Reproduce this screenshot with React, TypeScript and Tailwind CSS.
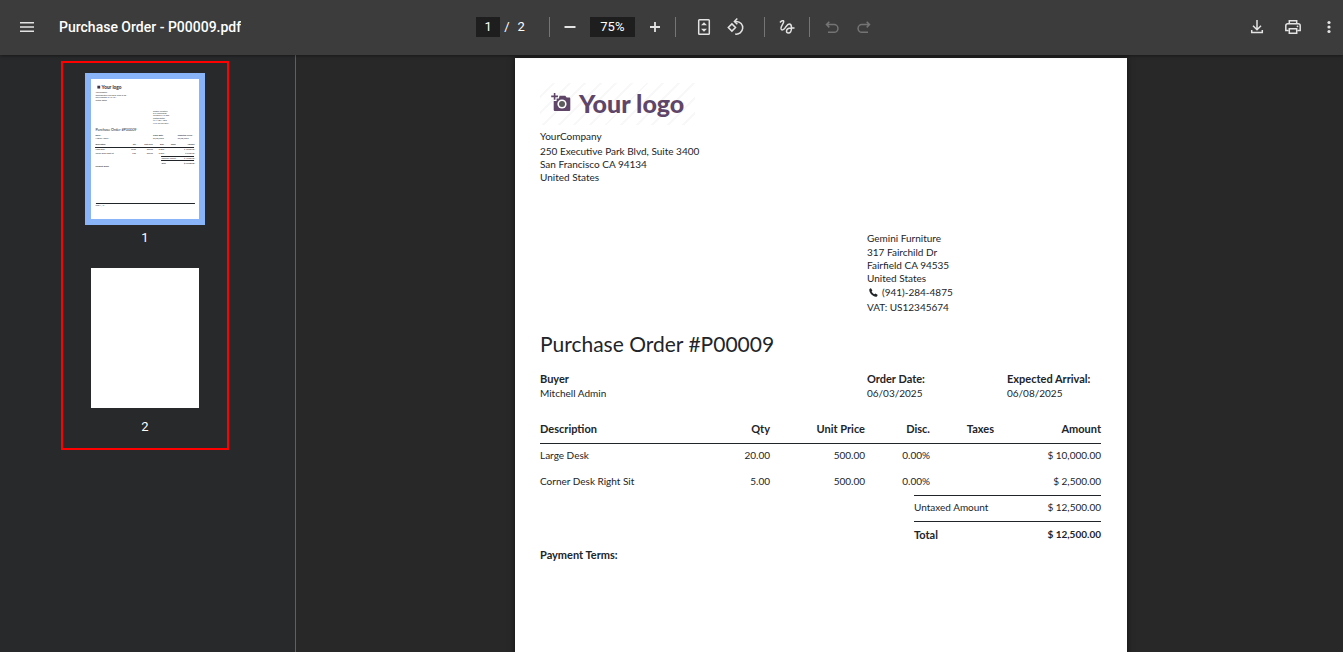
import type { ReactNode } from "react";

type IconProps = { children: ReactNode };

function Icon({ children }: IconProps) {
  return (
    <svg
      viewBox="0 0 20 20"
      className="h-5 w-5 shrink-0"
      fill="none"
      stroke="currentColor"
      strokeWidth="1.5"
      aria-hidden="true"
    >
      {children}
    </svg>
  );
}

type ToolButtonProps = { label: string; disabled?: boolean; children: ReactNode };

function ToolButton({ label, disabled, children }: ToolButtonProps) {
  return (
    <button
      type="button"
      aria-label={label}
      disabled={disabled}
      className="flex h-8 w-8 shrink-0 items-center justify-center rounded-full text-[#e3e3e3] hover:bg-white/10 disabled:text-[#747474]"
    >
      <Icon>{children}</Icon>
    </button>
  );
}

function Divider() {
  return <span className="h-5 w-px shrink-0 bg-[#757575]" />;
}

function Toolbar() {
  return (
    <header className="relative z-10 flex h-[55px] shrink-0 items-center bg-[#3c3c3c] pb-0.5 font-['Roboto',sans-serif] text-white shadow-[0_1px_3px_rgba(0,0,0,0.4)]">
      <div className="flex min-w-0 flex-1 items-center gap-4 pl-[11px]">
        <ToolButton label="Menu">
          <path d="M3 5.750h14M3 10h14M3 14.250h14" />
        </ToolButton>
        <h1 className="truncate text-sm font-medium">Purchase Order - P00009.pdf</h1>
      </div>

      <div className="flex shrink-0 items-center pr-2.5 pl-3 text-[13px]">
        <input
          aria-label="Page number"
          defaultValue="1"
          className="h-5 w-6 bg-[#1e1e1e] text-center outline-none"
        />
        <span className="ml-1">/</span>
        <span className="mr-6 ml-2">2</span>
        <Divider />
        <div className="mx-1 flex items-center gap-1">
          <ToolButton label="Zoom out">
            <path d="M4.500 10h11" strokeWidth="2" />
          </ToolButton>
          <input
            aria-label="Zoom level"
            defaultValue="75%"
            className="h-5 w-[45px] bg-[#1e1e1e] text-center outline-none"
          />
          <ToolButton label="Zoom in">
            <path d="M5 10h10M10 5v10" strokeWidth="1.8" />
          </ToolButton>
        </div>
        <Divider />
        <div className="mx-3 flex items-center">
          <ToolButton label="Fit to page">
            <rect x="4.700" y="2.700" width="10.600" height="14.600" rx="0.800" />
            <path d="M10 5.200l3 3H7zM10 14.800l3-3H7z" fill="currentColor" stroke="none" />
          </ToolButton>
          <ToolButton label="Rotate counterclockwise">
            <path d="M5.900 6.900l3.600 3.600-3.600 3.600-3.600-3.600z" />
            <path d="M8.800 4.400h1.700a6.400 6.400 0 1 1-1.300 12.700" />
            <path d="M11.300 1.500L8.400 4.400l2.900 2.900" />
          </ToolButton>
        </div>
        <Divider />
        <div className="mx-1.5 flex items-center">
          <ToolButton label="Draw">
            <path
              d="M3 5.500C4.200 4 6.700 2.700 6.700 4.700 6.700 6.600 3.400 9.600 4 11.800c.6 1.700 2.400 1.300 3.700-.4C9.300 9.300 10.300 6.900 12.200 6.900c1.700 0 2.300 1.600 2.300 3.500 0 2.700-1.100 5.600-3.200 5.600-1.100 0-1.800-.7-1.800-1.700 0-1.900 2-3.300 4.700-3.300H17.500"
              strokeLinejoin="round"
            />
          </ToolButton>
        </div>
        <Divider />
        <div className="ml-1.5 flex items-center">
          <ToolButton label="Undo" disabled>
            <path d="M7.300 4.800L4.500 7.600l2.800 2.800M4.700 7.600h7.400a3.600 3.600 0 0 1 0 7.700H6" />
          </ToolButton>
          <ToolButton label="Redo" disabled>
            <path d="M12.700 4.800l2.800 2.800-2.800 2.800M15.300 7.600H7.900a3.600 3.600 0 0 0 0 7.700H14" />
          </ToolButton>
        </div>
      </div>

      <div className="flex flex-1 items-center justify-end gap-2 [&>button]:w-7">
        <ToolButton label="Download">
          <path d="M10 3v9.500M6 8.700l4 4 4-4M4.700 13v2.600h10.600V13" />
        </ToolButton>
        <ToolButton label="Print">
          <path d="M6.300 6.700V3.700h7.400v3M5.700 13.500H2.800V8.800c0-1.200.8-2 2-2h10.400c1.200 0 2 .8 2 2v4.700h-2.900" />
          <path d="M6.300 11.800h7.400v4.500H6.300z" />
          <circle cx="14.500" cy="9.300" r="0.900" fill="currentColor" stroke="none" />
        </ToolButton>
        <ToolButton label="More actions">
          <g fill="currentColor" stroke="none">
            <circle cx="10" cy="5.500" r="1.600" />
            <circle cx="10" cy="10" r="1.600" />
            <circle cx="10" cy="14.500" r="1.600" />
          </g>
        </ToolButton>
      </div>
    </header>
  );
}

function PagePreview() {
  return (
    <svg
      viewBox="0 0 612 792"
      className="h-[140px] w-[108px] bg-white"
      fontFamily="Lato, sans-serif"
      fontSize="11"
      fill="#212529"
      preserveAspectRatio="none"
      aria-hidden="true"
    >
      <path d="M36 38h16v16H36z" fill="#3f3346" />
      <text x="60" y="54" fontSize="27" fontWeight="900" fill="#3f3346">Your logo</text>
      <text x="25" y="82">YourCompany</text>
      <text x="25" y="97">250 Executive Park Blvd, Suite 3400</text>
      <text x="25" y="109">San Francisco CA 94134</text>
      <text x="25" y="122">United States</text>
      <text x="352" y="184">Gemini Furniture</text>
      <text x="352" y="198">317 Fairchild Dr</text>
      <text x="352" y="211">Fairfield CA 94535</text>
      <text x="352" y="224">United States</text>
      <text x="352" y="238">(941)-284-4875</text>
      <text x="352" y="253">VAT: US12345674</text>
      <text x="25" y="293" fontSize="21">Purchase Order #P00009</text>
      <g fontWeight="700">
        <text x="25" y="324">Buyer</text>
        <text x="352" y="324">Order Date:</text>
        <text x="492" y="324">Expected Arrival:</text>
        <text x="25" y="375">Description</text>
        <text x="255" y="375" textAnchor="end">Qty</text>
        <text x="350" y="375" textAnchor="end">Unit Price</text>
        <text x="415" y="375" textAnchor="end">Disc.</text>
        <text x="479" y="375" textAnchor="end">Taxes</text>
        <text x="586" y="375" textAnchor="end">Amount</text>
        <text x="399" y="480">Total</text>
        <text x="586" y="480" textAnchor="end">$ 12,500.00</text>
        <text x="25" y="500">Payment Terms:</text>
      </g>
      <text x="25" y="339">Mitchell Admin</text>
      <text x="352" y="339">06/03/2025</text>
      <text x="492" y="339">06/08/2025</text>
      <text x="25" y="401">Large Desk</text>
      <text x="255" y="401" textAnchor="end">20.00</text>
      <text x="350" y="401" textAnchor="end">500.00</text>
      <text x="415" y="401" textAnchor="end">0.00%</text>
      <text x="586" y="401" textAnchor="end">$ 10,000.00</text>
      <text x="25" y="427">Corner Desk Right Sit</text>
      <text x="255" y="427" textAnchor="end">5.00</text>
      <text x="350" y="427" textAnchor="end">500.00</text>
      <text x="415" y="427" textAnchor="end">0.00%</text>
      <text x="586" y="427" textAnchor="end">$ 2,500.00</text>
      <text x="399" y="453">Untaxed Amount</text>
      <text x="586" y="453" textAnchor="end">$ 12,500.00</text>
      <path d="M23 384.600h561v5.700H23zM397 435.500h187v5.700H397zM397 458.200h187v5.700H397zM28 701.500h561v5.700H28z" />
      <text x="25" y="718">Page 1 / 2</text>
    </svg>
  );
}

function Sidebar() {
  return (
    <nav
      aria-label="Page thumbnails"
      className="w-[296px] shrink-0 border-r border-[#5f6063] bg-[#28292a] pt-1.5 font-['Roboto',sans-serif] text-[13px] leading-5 text-white"
    >
      <div className="ml-[61px] flex w-[168px] flex-col items-center border-2 border-[#ff0000] pt-2.5 pb-[11px]">
        <button type="button" className="flex flex-col items-center">
          <span className="border-[6px] border-[#8ab4f8]">
            <PagePreview />
          </span>
          <span className="mt-[3px]">1</span>
        </button>
        <button type="button" className="mt-5 flex flex-col items-center gap-[9px]">
          <span className="h-[140px] w-[108px] bg-white" />
          <span>2</span>
        </button>
      </div>
    </nav>
  );
}

function Logo() {
  return (
    <div className="flex h-[42px] w-[155px] items-center gap-2 bg-[repeating-linear-gradient(135deg,#fff_0px,#fff_9px,#f8f8f9_9px,#f8f8f9_11px)] pb-0.5 pl-[11px] text-[#5f4668]">
      <svg viewBox="0 0 20 20" className="h-5 w-5 shrink-0" aria-hidden="true">
        <path
          fill="currentColor"
          d="M2.800 0h1.600v2.600H7v1.600H4.400v2.600H2.800V4.200H.2V2.600h2.600zM8.500 2.800h5.800L15.700 4.500H18c.8 0 1.300.5 1.300 1.300v11c0 .8-.5 1.300-1.300 1.300H4c-.8 0-1.300-.5-1.300-1.300V8h2.900V5.400h2.300z"
        />
        <circle cx="11" cy="11" r="4.600" fill="#fff" />
        <circle cx="11" cy="11" r="3" fill="#5c5c5c" />
      </svg>
      <span className="text-[25px] leading-none font-black whitespace-nowrap">Your logo</span>
    </div>
  );
}

const lines = [
  { name: "Large Desk", qty: "20.00", price: "500.00", disc: "0.00%", amount: "$ 10,000.00" },
  { name: "Corner Desk Right Sit", qty: "5.00", price: "500.00", disc: "0.00%", amount: "$ 2,500.00" },
];

function PurchaseOrder() {
  return (
    <article className="min-h-[792px] w-[612px] shrink-0 bg-white pt-[25px] pr-[26px] pl-[25px] font-['Lato',sans-serif] text-[10px] leading-[13px] text-[#212529] shadow-[0_0_6px_rgba(0,0,0,0.6)]">
      <Logo />
      <address className="mt-[5px] not-italic">
        <p className="mb-0.5">YourCompany</p>
        <p>250 Executive Park Blvd, Suite 3400</p>
        <p>San Francisco CA 94134</p>
        <p>United States</p>
      </address>

      <address className="mt-12 ml-[327px] not-italic">
        <p className="mb-px">Gemini Furniture</p>
        <p>317 Fairchild Dr</p>
        <p>Fairfield CA 94535</p>
        <p>United States</p>
        <p className="mt-px flex items-center gap-1 pl-0.5">
          <svg viewBox="0 0 12 12" className="h-[9px] w-[9px]" fill="currentColor" aria-hidden="true">
            <path d="M.5 1.800C1 .9 2 .4 2.800.5l1.700 2.900-1 1.300c.5 1.500 2 3 3.600 3.700l1.400-1 2.900 1.700c.1.900-.4 1.900-1.300 2.400C5.600 12.500-.5 6.200.5 1.800z" />
          </svg>
          <span>(941)-284-4875</span>
        </p>
        <p className="mt-0.5">VAT: US12345674</p>
      </address>

      <h2 className="mt-[17px] text-[21px] leading-[26px]">Purchase Order #P00009</h2>

      <dl className="mt-3.5 grid grid-cols-[327px_140px_1fr] leading-[15px] [&_dt]:text-[11px] [&_dt]:font-bold">
        <div>
          <dt>Buyer</dt>
          <dd>Mitchell Admin</dd>
        </div>
        <div>
          <dt>Order Date:</dt>
          <dd>06/03/2025</dd>
        </div>
        <div>
          <dt>Expected Arrival:</dt>
          <dd>06/08/2025</dd>
        </div>
      </dl>

      <table className="mt-4 w-full table-fixed text-right">
        <thead>
          <tr className="h-[26px] border-b border-[#212529] text-[11px] [&>th]:pb-0.5">
            <th className="w-[170px] text-left">Description</th>
            <th className="w-[60px]">Qty</th>
            <th className="w-[95px]">Unit Price</th>
            <th className="w-[65px]">Disc.</th>
            <th className="w-[64px]">Taxes</th>
            <th>Amount</th>
          </tr>
        </thead>
        <tbody>
          {lines.map((line) => (
            <tr key={line.name} className="h-[26px] [&>td]:pb-0.5">
              <td className="text-left">{line.name}</td>
              <td>{line.qty}</td>
              <td>{line.price}</td>
              <td>{line.disc}</td>
              <td />
              <td>{line.amount}</td>
            </tr>
          ))}
        </tbody>
      </table>

      <table className="ml-auto w-[187px]">
        <tbody>
          <tr className="h-[26px] border-t border-[#212529]">
            <th className="pb-0.5 text-left font-normal">Untaxed Amount</th>
            <td className="pb-0.5 text-right">$ 12,500.00</td>
          </tr>
          <tr className="h-[26px] border-t border-[#212529] font-bold">
            <th className="text-left text-[11px]">Total</th>
            <td className="text-right">$ 12,500.00</td>
          </tr>
        </tbody>
      </table>

      <p className="text-[11px] font-bold">Payment Terms:</p>
    </article>
  );
}

export default function App() {
  return (
    <div className="flex h-screen flex-col overflow-hidden bg-[#282828]">
      <Toolbar />
      <div className="flex min-h-0 flex-1">
        <Sidebar />
        <main className="flex min-w-0 flex-1 justify-center overflow-hidden pt-[3px] pl-[3px]">
          <PurchaseOrder />
        </main>
      </div>
    </div>
  );
}
